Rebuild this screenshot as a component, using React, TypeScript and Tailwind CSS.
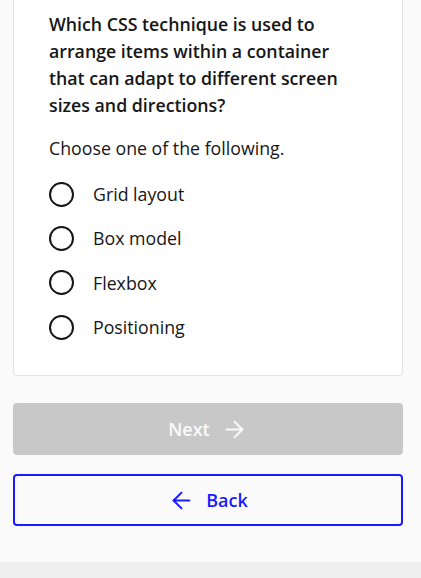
import { ArrowLeft, ArrowRight } from 'lucide-react';

const options = ['Grid layout', 'Box model', 'Flexbox', 'Positioning'];

export default function App() {
  return (
    <div
      className="min-h-[578px] w-[421px] bg-[#fafafa] flex flex-col overflow-hidden"
      style={{ fontFamily: '"Open Sans", sans-serif' }}
    >
      <div className="flex-1 pl-[13px] pr-[18px]">
        {/* Question card (scrolled, top is above the fold) */}
        <div className="-mt-[26px] bg-white border border-[#e2e2e2] rounded-[4px] pt-[36px] pb-[25px] px-[35px]">
          <h2 className="text-[17.75px] leading-[27px] font-semibold text-[#161616]">
            Which CSS technique is used to arrange items within a container that can adapt to different screen
            sizes and directions?
          </h2>
          <p className="mt-[16px] text-[17.75px] leading-[27px] text-[#161616]">Choose one of the following.</p>
          <ul className="mt-[10px] flex flex-col">
            {options.map((o) => (
              <li key={o} className="flex items-center h-[44.4px]">
                <span className="w-[25px] h-[25px] rounded-full border-2 border-[#161616] shrink-0" />
                <span className="ml-[19px] text-[17.75px] text-[#161616]">{o}</span>
              </li>
            ))}
          </ul>
        </div>

        <button className="mt-[27px] w-full h-[52px] pt-[2px] rounded-[4px] bg-[#c8c8c8] text-[#fafafa] flex items-center justify-center gap-[11px] text-[18px] font-semibold">
          Next
          <ArrowRight size={27} strokeWidth={1.8} />
        </button>
        <button className="mt-[19px] w-full h-[52px] pt-[2px] rounded-[4px] border-2 border-[#1a1aff] text-[#1a1aff] flex items-center justify-center gap-[11px] text-[18px] font-semibold">
          <ArrowLeft size={27} strokeWidth={1.8} />
          Back
        </button>
      </div>
      <div className="h-[16px] bg-[#eeeeee] mt-[36px]" />
    </div>
  );
}
